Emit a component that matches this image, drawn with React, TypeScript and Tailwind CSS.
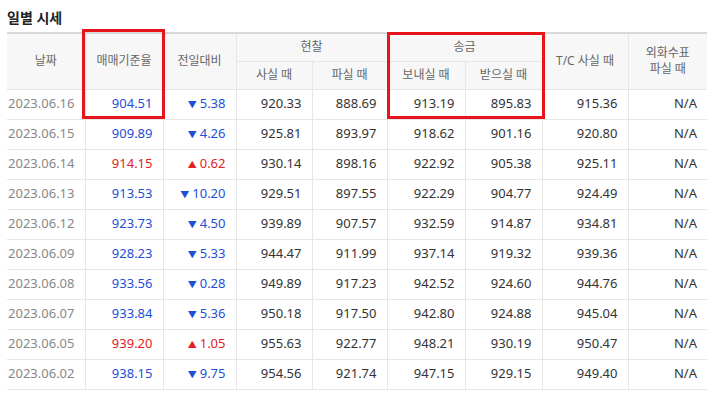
const rows: [string, string, number, string, string, string, string, string, string][] = [
  ["2023.06.16", "904.51", -1, "5.38", "920.33", "888.69", "913.19", "895.83", "915.36"],
  ["2023.06.15", "909.89", -1, "4.26", "925.81", "893.97", "918.62", "901.16", "920.80"],
  ["2023.06.14", "914.15", 1, "0.62", "930.14", "898.16", "922.92", "905.38", "925.11"],
  ["2023.06.13", "913.53", -1, "10.20", "929.51", "897.55", "922.29", "904.77", "924.49"],
  ["2023.06.12", "923.73", -1, "4.50", "939.89", "907.57", "932.59", "914.87", "934.81"],
  ["2023.06.09", "928.23", -1, "5.33", "944.47", "911.99", "937.14", "919.32", "939.36"],
  ["2023.06.08", "933.56", -1, "0.28", "949.89", "917.23", "942.52", "924.60", "944.76"],
  ["2023.06.07", "933.84", -1, "5.36", "950.18", "917.50", "942.80", "924.88", "945.04"],
  ["2023.06.05", "939.20", 1, "1.05", "955.63", "922.77", "948.21", "930.19", "950.47"],
  ["2023.06.02", "938.15", -1, "9.75", "954.56", "921.74", "947.15", "929.15", "949.40"],
];

const th = "border border-[#e6e6e6] font-normal text-[12px] text-[#666] bg-[#f7f7f7]";
const td = "border border-[#e6e6e6] text-[13px] text-right pr-[10px]";

export default function App() {
  return (
    <div className="w-[720px] h-[407px] bg-white pl-[7px] pr-[13px] pt-[8px]" style={{ fontFamily: '"Noto Sans", "Noto Sans CJK KR", sans-serif' }}>
      <h2 className="text-[14px] font-bold text-[#222] leading-[20px] mb-[4px]">일별 시세</h2>
      <div className="relative">
        <table className="w-[700px] border-collapse border-t-2 border-t-[#d8d8d8] table-fixed">
          <colgroup>
            <col className="w-[78px]" /><col className="w-[78px]" /><col className="w-[73px]" /><col className="w-[76px]" />
            <col className="w-[75px]" /><col className="w-[78px]" /><col className="w-[77px]" /><col className="w-[86px]" /><col className="w-[79px]" />
          </colgroup>
          <thead>
            <tr className="h-[28px]">
              <th rowSpan={2} className={`${th} border-l-0`}>날짜</th>
              <th rowSpan={2} className={th}>매매기준율</th>
              <th rowSpan={2} className={th}>전일대비</th>
              <th colSpan={2} className={th}>현찰</th>
              <th colSpan={2} className={th}>송금</th>
              <th rowSpan={2} className={th}>T/C 사실 때</th>
              <th rowSpan={2} className={`${th} border-r-0 leading-[16px]`}>외화수표<br />파실 때</th>
            </tr>
            <tr className="h-[28px]">
              <th className={th}>사실 때</th>
              <th className={th}>파실 때</th>
              <th className={th}>보내실 때</th>
              <th className={th}>받으실 때</th>
            </tr>
          </thead>
          <tbody>
            {rows.map((r) => {
              const up = r[2] > 0;
              const c = up ? "text-[#e52121]" : "text-[#1d4fd8]";
              return (
                <tr key={r[0]} className="h-[30px] text-[#333]">
                  <td className={`${td} border-l-0 text-center pr-0 text-[#888]`}>{r[0]}</td>
                  <td className={`${td} text-center pr-0 ${c}`}>{r[1]}</td>
                  <td className={`${td} text-center pr-0 ${c}`}><span className="text-[9px] mr-[3px]">{up ? "▲" : "▼"}</span>{r[3]}</td>
                  <td className={td}>{r[4]}</td>
                  <td className={td}>{r[5]}</td>
                  <td className={td}>{r[6]}</td>
                  <td className={td}>{r[7]}</td>
                  <td className={td}>{r[8]}</td>
                  <td className={`${td} border-r-0`}>N/A</td>
                </tr>
              );
            })}
          </tbody>
        </table>
        <div className="absolute left-[75px] top-[-3px] w-[83px] h-[90px] border-[3px] border-[#e8141c]" />
        <div className="absolute left-[380px] top-[0px] w-[158px] h-[87px] border-[3px] border-[#e8141c]" />
      </div>
    </div>
  );
}
